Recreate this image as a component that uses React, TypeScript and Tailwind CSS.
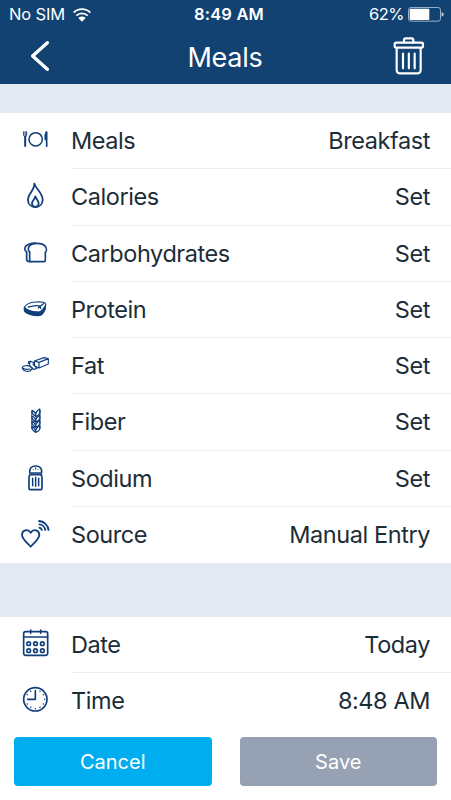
import type { ReactNode } from 'react';

const stroke = {
  fill: 'none',
  stroke: 'currentColor',
  strokeLinecap: 'round' as const,
  strokeLinejoin: 'round' as const,
};

function Icon({ children, width = 5 }: { children: ReactNode; width?: number }) {
  return (
    <svg viewBox="0 0 96 96" className="size-8 shrink-0 text-[#103f7c]" {...stroke} strokeWidth={width}>
      {children}
    </svg>
  );
}

const PlateIcon = () => (
  <Icon width={4.5}>
    <circle cx="50" cy="43" r="20" />
    <path d="M14 20v11q0 4 4.5 4t4.5-4V20M18.5 20v13" strokeWidth={3} />
    <path d="M18.5 35v28" strokeWidth={6} />
    <path d="M83 21v43M82 21q-5 8-3 22h4z" fill="currentColor" strokeWidth={5} />
  </Icon>
);

const FlameIcon = () => (
  <Icon width={5.5}>
    <path d="M46 8c3 14 25 27 25 48 0 13-9 22-22 22s-22-9-22-22c0-18 20-28 19-48z" />
    <path d="M49 46c2 8 10 13 10 21 0 7-4 11-10 11s-10-4-10-11c0-8 9-13 10-21z" />
  </Icon>
);

const BreadIcon = () => (
  <Icon width={5}>
    <path d="M35 71h40q4 0 4-4V43c5-5 4-14-2-20-9-9-36-9-45 0-6 6-5 15 0 19v25q0 4 3 4z" />
    <path d="M33 71q-10-1-10-6V42c-7-5-7-13-2-18 8-7 17-9 28-9" />
  </Icon>
);

const SteakIcon = () => (
  <Icon width={3.5}>
    <path d="M16 40c4-8 17-15 34-16 15-1 26 0 29 4 3 3 1 7-3 12-6 8-10 14-17 14-18 0-34-4-43-14z" />
    <path d="M16 41c9 9 26 14 43 14 9 0 14-8 20-17v7C73 58 69 65 59 65 39 65 18 58 16 50z" fill="currentColor" />
    <path d="M28 39c10-2 24-6 34-3M73 29 58 42M63 36l2 7" strokeWidth={4} />
  </Icon>
);

const ButterIcon = () => (
  <Icon width={3.5}>
    <path d="m46 33 29-10 13 3v16L60 54 47 48zM46 33l14 4 28-11M60 37v17" />
    <path d="m31 42 4-8 11 5M35 34l-6 1-1 5M46 39l-4 4 12 12-11 3-9-8-3-8" />
    <path d="M10 53c1-6 15-8 23-4l8 6-8 8c-10 3-24-2-23-10zM10 54c7 4 16 5 23 3" />
  </Icon>
);

const WheatIcon = () => (
  <Icon width={4}>
    <path d="M50 32c-1-9 3-18 12-23 3 10-2 19-12 23zM48 29c-7-3-10-8-9-16 5 2 8 5 10 9" />
    <path d="M50 48c-1-9 4-16 12-20 3 10-2 17-12 20zM50 48c-8-4-12-10-11-18 7 3 11 9 11 18z" />
    <path d="M50 64c-1-9 4-16 12-20 3 10-2 17-12 20zM50 64c-8-4-12-10-11-18 7 3 11 9 11 18z" />
    <path d="M50 79c-1-9 4-15 12-19 3 10-2 16-12 19zM50 79c-8-4-12-9-11-17 7 3 11 8 11 17z" />
    <path d="M38 16v52M63 14v52" strokeWidth={2.5} />
  </Icon>
);

const ShakerIcon = () => (
  <Icon width={5}>
    <path d="M32 26q0-17 18-17t18 17M32 30h36" />
    <path d="M33 35h34M34 35q-4 2-4 8v31q0 6 6 6h27q6 0 6-6V43q0-6-4-8" />
    <path d="M41 46v22M50 43v27M59 46v22" strokeWidth={4.5} />
    <path d="M50 14v5M43 20v.1M57 20v.1" strokeWidth={3} />
  </Icon>
);

const HeartIcon = () => (
  <Icon width={5.5}>
    <path d="M35 83C27 74 9 60 9 47c0-13 17-20 26-6 9-14 26-7 26 6 0 13-18 27-26 36z" />
    <path d="M58 6c17 0 30 13 31 29M59 16c11 0 19 8 20 19M59 26c6 0 9 4 10 9" strokeLinecap="butt" />
  </Icon>
);

const CalendarIcon = () => (
  <Icon width={5}>
    <rect x="14" y="8" width="72" height="71" rx="6" />
    <path d="M14 24h72M35 3v10M65 3v10" />
    {[44, 65].map((y) => [29, 49.5, 70].map((x) => <circle key={`${x}-${y}`} cx={x} cy={y} r="5.5" />))}
  </Icon>
);

const ClockIcon = () => (
  <Icon width={5}>
    <circle cx="49" cy="43" r="35" />
    <path d="M49 17v26H26" />
    <path d="M63 19v.1M73 29v.1M77 43v.1M73 57v.1M63 67v.1M49 71v.1M35 67v.1M25 57v.1M25 29v.1M35 19v.1" strokeWidth={4.5} />
  </Icon>
);

interface Entry {
  label: string;
  value: string;
  icon: ReactNode;
}

const nutrition: Entry[] = [
  { label: 'Meals', value: 'Breakfast', icon: <PlateIcon /> },
  { label: 'Calories', value: 'Set', icon: <FlameIcon /> },
  { label: 'Carbohydrates', value: 'Set', icon: <BreadIcon /> },
  { label: 'Protein', value: 'Set', icon: <SteakIcon /> },
  { label: 'Fat', value: 'Set', icon: <ButterIcon /> },
  { label: 'Fiber', value: 'Set', icon: <WheatIcon /> },
  { label: 'Sodium', value: 'Set', icon: <ShakerIcon /> },
  { label: 'Source', value: 'Manual Entry', icon: <HeartIcon /> },
];

const timing: Entry[] = [
  { label: 'Date', value: 'Today', icon: <CalendarIcon /> },
  { label: 'Time', value: '8:48 AM', icon: <ClockIcon /> },
];

function EntryList({ entries }: { entries: Entry[] }) {
  return (
    <ul className="bg-white">
      {entries.map((entry) => (
        <li key={entry.label} className="group flex h-[56.25px] items-center gap-5 pl-[19px]">
          {entry.icon}
          <div className="flex h-full flex-1 items-center justify-between border-b border-[#eceef5] pr-[21px] group-last:border-transparent">
            <span>{entry.label}</span>
            <span>{entry.value}</span>
          </div>
        </li>
      ))}
    </ul>
  );
}

function StatusBar() {
  return (
    <div className="grid h-[29px] grid-cols-3 items-center pl-[9px] pr-[7px] text-[16.5px] leading-none">
      <div className="flex items-center gap-2">
        <span className="tracking-[-0.01em]">No SIM</span>
        <svg viewBox="0 0 54 42" className="h-3.5 w-[18px]" fill="none" stroke="currentColor" strokeWidth="5.5">
          <path d="M2 14C16 0 38 0 52 14M10 23c9-9 25-9 34 0" />
          <path d="M27 41 16 30c6-6 16-6 22 0z" fill="currentColor" stroke="none" />
        </svg>
      </div>
      <span className="pl-[5px] text-center font-semibold tracking-[0.01em]">8:49 AM</span>
      <div className="flex items-center justify-end gap-1">
        <span className="tracking-[-0.03em]">62%</span>
        <svg viewBox="0 0 108 44" className="h-[14.67px] w-9" fill="none">
          <rect x="1.5" y="1.5" width="96" height="41" rx="7" stroke="#9db2c9" strokeWidth="3" />
          <rect x="5" y="5" width="59" height="34" rx="3" fill="white" />
          <path d="M101 15q6 2 6 7t-6 7z" fill="#c5d1de" />
        </svg>
      </div>
    </div>
  );
}

function NavBar() {
  return (
    <div className="grid h-[54px] grid-cols-3 items-center pl-[29px] pr-[26px]">
      <button aria-label="Back">
        <svg viewBox="0 0 60 96" className="h-8 w-5" fill="none" stroke="white" strokeWidth="10" strokeLinecap="round" strokeLinejoin="round">
          <path d="M55 8 11 48l44 40" />
        </svg>
      </button>
      <h1 className="pt-0.5 pr-1 text-center text-[27px] leading-none tracking-[-0.01em]">Meals</h1>
      <button aria-label="Delete" className="justify-self-end">
        <svg viewBox="0 0 96 114" className="h-[38px] w-8" fill="none" stroke="white" strokeWidth="6.5" strokeLinecap="round" strokeLinejoin="round">
          <path d="M33 16V9q0-5 5-5h18q5 0 5 5v7" />
          <rect x="5" y="17" width="85" height="15" rx="5" />
          <path d="M11 33v65q0 11 11 11h50q11 0 11-11V33M30 50v44M47.5 50v44M65 50v44" />
        </svg>
      </button>
    </div>
  );
}

export default function App() {
  return (
    <div className="flex h-[800px] w-[451px] flex-col overflow-hidden bg-[#e5e9f2] font-['Inter',sans-serif] text-[23.5px] tracking-[-0.018em] text-[#1c2d38]">
      <header className="h-[84px] bg-[#114272] tracking-normal text-white">
        <StatusBar />
        <NavBar />
      </header>
      <main className="flex flex-1 flex-col gap-[54px] pt-[29px]">
        <EntryList entries={nutrition} />
        <div className="flex-1 bg-white">
          <EntryList entries={timing} />
          <div className="grid grid-cols-2 gap-7 px-3.5 pt-[7.5px] text-xl tracking-normal text-white">
            <button className="h-[49px] rounded bg-[#00adef]">Cancel</button>
            <button className="h-[49px] rounded bg-[#96a2b3]">Save</button>
          </div>
        </div>
      </main>
    </div>
  );
}
